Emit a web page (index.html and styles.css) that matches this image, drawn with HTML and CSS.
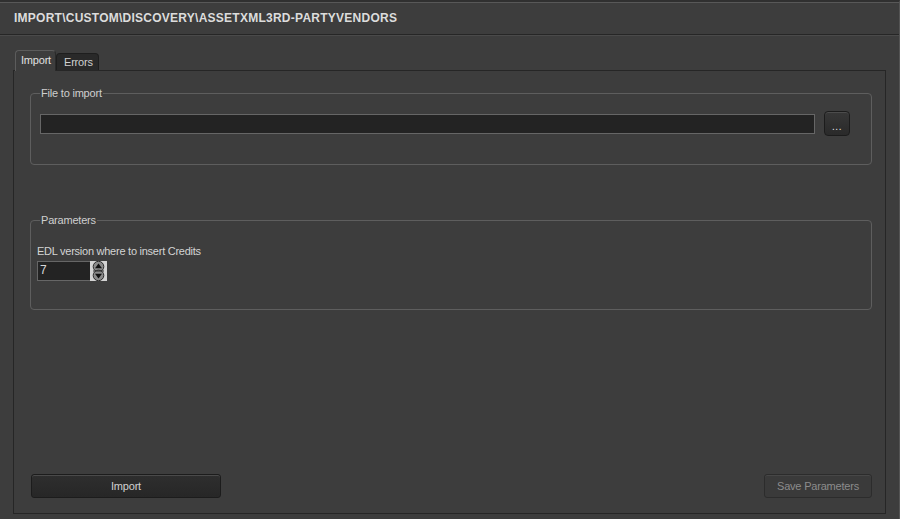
FILE: index.html
```html
<!DOCTYPE html>
<html>
<head>
<meta charset="utf-8">
<link rel="stylesheet" href="styles.css">
</head>
<body>
<div class="window">
  <div class="titlebar">IMPORT\CUSTOM\DISCOVERY\ASSETXML3RD-PARTYVENDORS</div>
  <div class="main">
    <div class="tabs">
      <div class="tab active">Import</div>
      <div class="tab">Errors</div>
    </div>
    <div class="pane">
      <fieldset class="group group-file">
        <legend>File to import</legend>
        <div class="row">
          <div class="input"></div>
          <button class="browse">...</button>
        </div>
      </fieldset>
      <fieldset class="group group-params">
        <legend>Parameters</legend>
        <div class="label">EDL version where to insert Credits</div>
        <div class="spin">
          <span class="spin-value">7</span>
          <svg class="spin-btns" width="17" height="20" viewBox="0 0 17 20">
            <rect x="0" y="0" width="17" height="20" fill="#d4d4d4"/>
            <circle cx="8.5" cy="5.6" r="5.3" fill="#8a8a8a" stroke="#2c2c2c" stroke-width="1"/>
            <circle cx="8.5" cy="14.4" r="5.3" fill="#8a8a8a" stroke="#2c2c2c" stroke-width="1"/>
            <rect x="3" y="9.5" width="11" height="1" fill="#2c2c2c"/>
            <path d="M8.5 2.6 L12 7.2 L5 7.2 Z" fill="#111"/>
            <path d="M8.5 17.4 L12 12.8 L5 12.8 Z" fill="#111"/>
          </svg>
        </div>
      </fieldset>
      <div class="spacer"></div>
      <div class="actions">
        <button class="btn btn-import">Import</button>
        <button class="btn btn-save">Save Parameters</button>
      </div>
    </div>
  </div>
</div>
</body>
</html>
```
FILE: styles.css
```css
html, body {
  margin: 0;
  padding: 0;
}
body {
  background: #3d3d3d;
  font-family: "Liberation Sans", Arial, sans-serif;
  font-size: 11px;
  color: #d6d6d6;
}
.window {
  height: 519px;
  box-sizing: border-box;
  border-top: 2px solid #303030;
  border-right: 1px solid #545454;
  display: flex;
  flex-direction: column;
}
.titlebar {
  height: 31px;
  line-height: 31px;
  border-top: 1px solid #585858;
  border-bottom: 1px solid #262626;
  box-shadow: 0 1px 0 #4a4a4a;
  padding-left: 14px;
  font-size: 12px;
  font-weight: bold;
  letter-spacing: 0.25px;
  color: #dcdcdc;
}
.main {
  flex: 1;
  display: flex;
  flex-direction: column;
  padding: 15px 13px 5px 13px;
  min-height: 0;
}
.tabs {
  display: flex;
  align-items: flex-end;
  height: 20px;
  padding-left: 2px;
  position: relative;
  z-index: 1;
}
.tab {
  box-sizing: border-box;
  height: 17px;
  line-height: 16px;
  padding: 0 7px;
  letter-spacing: -0.2px;
  border-radius: 4px 4px 0 0;
  background: #292929;
  border: 1px solid #1e1e1e;
  border-bottom: none;
  color: #d0d0d0;
}
.tab.active {
  height: 21px;
  margin-bottom: -1px;
  line-height: 18px;
  padding: 0 5px 0 5px;
  width: 41px;
  background: #3d3d3d;
  border: 1px solid #5c5c5c;
  border-right-color: #2a2a2a;
  border-bottom: none;
  color: #e0e0e0;
}
.tab + .tab {
  width: 43px;
  padding: 0 0 0 7px;
}
.pane {
  flex: 1;
  display: flex;
  flex-direction: column;
  border: 1px solid #262626;
  padding: 16px 13px 15px 16px;
}
.group {
  margin: 0;
  border: 1px solid #5e5e5e;
  border-radius: 4px;
  min-width: 0;
}
.group legend {
  padding: 0 1px;
  line-height: 13px;
  letter-spacing: -0.2px;
  color: #cfcfcf;
}
.group-file {
  padding: 11px 21px 28px 9px;
}
.group-file legend {
  margin-left: 0;
}
.row {
  display: flex;
  align-items: center;
  gap: 9px;
}
.input {
  flex: 1;
  height: 20px;
  box-sizing: border-box;
  background: #232323;
  border: 1px solid #666;
}
.browse {
  width: 26px;
  height: 25px;
  box-sizing: border-box;
  margin: 0;
  padding: 6px 0 0 0;
  border: 1px solid #1c1c1c;
  border-radius: 4px;
  background: linear-gradient(#373737, #2a2a2a);
  box-shadow: inset 0 1px 0 #4c4c4c;
  color: #e6e6e6;
  font-family: "Liberation Sans", Arial, sans-serif;
  font-size: 10px;
  line-height: 12px;
  letter-spacing: 0.5px;
}
.group-params {
  margin-top: 49px;
  padding: 18px 10px 28px 6px;
}
.group-params legend {
  margin-left: 3px;
}
.label {
  line-height: 13px;
  letter-spacing: -0.25px;
  color: #d4d4d4;
}
.spin {
  margin-top: 3px;
  display: flex;
  width: 70px;
  height: 20px;
}
.spin-value {
  flex: 1;
  box-sizing: border-box;
  height: 20px;
  background: #232323;
  border: 1px solid #666;
  border-right: none;
  padding-left: 2px;
  line-height: 17px;
  font-size: 12px;
  color: #d8d8d8;
}
.spin-btns {
  display: block;
}
.spacer {
  flex: 1;
}
.actions {
  display: flex;
  justify-content: space-between;
}
.btn {
  height: 24px;
  box-sizing: border-box;
  margin: 0;
  border-radius: 3px;
  font-family: "Liberation Sans", Arial, sans-serif;
  font-size: 11px;
  letter-spacing: -0.2px;
  padding: 0;
}
.btn-import {
  width: 190px;
  margin-left: 1px;
  background: linear-gradient(#2e2e2e, #272727);
  border: 1px solid #1c1c1c;
  box-shadow: inset 0 1px 0 #4a4a4a;
  color: #d0d0d0;
}
.btn-save {
  width: 108px;
  background: #3a3a3a;
  border: 1px solid #2c2c2c;
  box-shadow: inset 0 1px 0 #474747;
  color: #8c8c8c;
}
```
